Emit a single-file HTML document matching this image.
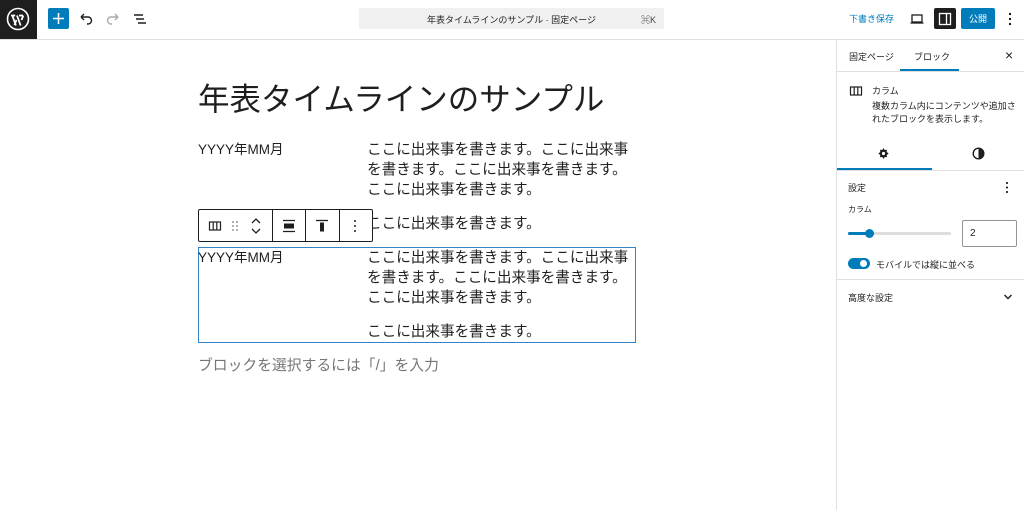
<!DOCTYPE html>
<html><head><meta charset="utf-8"><style>
*{box-sizing:border-box;margin:0;padding:0}
body{width:1024px;height:510px;overflow:hidden;background:#fff;font-family:"Liberation Sans","Noto Sans CJK JP",sans-serif;color:#1e1e1e;position:relative}
.a{position:absolute}
.t{white-space:nowrap}
</style></head><body>
<div class="a" style="left:0;top:0;width:1024px;height:40px;border-bottom:1px solid #e0e0e0"></div>
<div class="a" style="left:0;top:0;width:37px;height:39px;background:#1e1e1e"></div>
<svg class="a" style="left:6px;top:7px" width="24" height="24" viewBox="0 0 24 24"><circle cx="12" cy="12" r="10.5" fill="none" stroke="#fff" stroke-width="1.6"/><path d="M5 8.5h4.2M13 8.5h4M6.3 8.5l3.6 10M11 8.5l3.6 10M10.4 13l-2 5.2M15.5 13l1.8-4.5" stroke="#fff" stroke-width="1.8" fill="none"/></svg>
<div class="a" style="left:48px;top:8px;width:21px;height:21px;background:#007cba;border-radius:2px"></div>
<svg class="a" style="left:48px;top:8px" width="21" height="21"><path d="M10.5 5v11M5 10.5h11" stroke="#fff" stroke-width="1.5"/></svg>
<svg class="a" style="left:78px;top:11px" width="16" height="16"><path d="M3 6h7a3.5 3.5 0 0 1 0 7H9M3 6l3-3M3 6l3 3" stroke="#1e1e1e" stroke-width="1.4" fill="none"/></svg>
<svg class="a" style="left:105px;top:11px" width="16" height="16"><path d="M13 6H6a3.5 3.5 0 0 0 0 7h1M13 6l-3-3M13 6l-3 3" stroke="#aaa" stroke-width="1.4" fill="none"/></svg>
<svg class="a" style="left:132px;top:11px" width="16" height="16"><path d="M2 4h9M4 8h8M6 12h8" stroke="#1e1e1e" stroke-width="1.4"/></svg>
<div class="a" style="left:359px;top:8px;width:305px;height:21px;background:#f0f0f0;border-radius:2px"></div>
<div class="a t" style="left:359px;top:13px;width:305px;text-align:center;font-size:9px;color:#1e1e1e">年表タイムラインのサンプル · 固定ページ</div>
<div class="a t" style="left:641px;top:13px;font-size:9px;color:#444">⌘K</div>
<div class="a t" style="left:849px;top:12px;font-size:9px;color:#007cba">下書き保存</div>
<svg class="a" style="left:909px;top:11px" width="16" height="16"><rect x="3" y="4" width="10" height="7" fill="none" stroke="#1e1e1e" stroke-width="1.3"/><path d="M1.5 12h13" stroke="#1e1e1e" stroke-width="1.3"/></svg>
<div class="a" style="left:934px;top:8px;width:22px;height:21px;background:#1e1e1e;border-radius:2px"></div>
<svg class="a" style="left:937px;top:11px" width="16" height="16"><rect x="2.5" y="2.5" width="11" height="11" fill="none" stroke="#fff" stroke-width="1.3"/><path d="M9.5 2.5v11" stroke="#fff" stroke-width="1.3"/></svg>
<div class="a" style="left:961px;top:8px;width:34px;height:21px;background:#007cba;border-radius:2px"></div>
<div class="a t" style="left:961px;top:12px;width:34px;text-align:center;font-size:9px;color:#fff">公開</div>
<svg class="a" style="left:1004px;top:10px" width="12" height="18"><circle cx="6" cy="4" r="1.1"/><circle cx="6" cy="9" r="1.1"/><circle cx="6" cy="14" r="1.1"/></svg>

<div class="a" style="left:836px;top:40px;width:1px;height:470px;background:#e0e0e0"></div>
<div class="a t" style="left:849px;top:50px;font-size:9px">固定ページ</div>
<div class="a t" style="left:914px;top:50px;font-size:9px">ブロック</div>
<div class="a" style="left:900px;top:69px;width:59px;height:2px;background:#007cba"></div>
<div class="a t" style="left:1005px;top:47px;font-size:14px">×</div>
<div class="a" style="left:837px;top:71px;width:187px;height:1px;background:#e0e0e0"></div>
<svg class="a" style="left:849px;top:84px" width="14" height="14"><rect x="1.5" y="3" width="11" height="8" fill="none" stroke="#1e1e1e" stroke-width="1.2"/><path d="M5.2 3v8M8.8 3v8" stroke="#1e1e1e" stroke-width="1.2"/></svg>
<div class="a t" style="left:872px;top:84px;font-size:9px">カラム</div>
<div class="a t" style="left:872px;top:100px;font-size:9px;line-height:13px">複数カラム内にコンテンツや追加さ<br>れたブロックを表示します。</div>
<svg class="a" style="left:877px;top:147px" width="13" height="13" viewBox="0 0 13 13"><path d="M6.5 1l1.2 2 2.3-.3-.3 2.3 2 1.5-2 1.5.3 2.3-2.3-.3-1.2 2-1.2-2-2.3.3.3-2.3-2-1.5 2-1.5-.3-2.3 2.3.3z" fill="#1e1e1e"/><circle cx="6.5" cy="6.5" r="1.6" fill="#fff"/></svg>
<svg class="a" style="left:972px;top:147px" width="13" height="13"><circle cx="6.5" cy="6.5" r="5.3" fill="none" stroke="#1e1e1e" stroke-width="1.4"/><path d="M6.5 1.2a5.3 5.3 0 0 1 0 10.6z" fill="#1e1e1e"/></svg>
<div class="a" style="left:837px;top:168px;width:95px;height:2px;background:#007cba"></div>
<div class="a" style="left:837px;top:170px;width:187px;height:1px;background:#e0e0e0"></div>
<div class="a t" style="left:848px;top:181px;font-size:9px">設定</div>
<svg class="a" style="left:1001px;top:180px" width="12" height="16"><circle cx="6" cy="3" r="1"/><circle cx="6" cy="7.5" r="1"/><circle cx="6" cy="12" r="1"/></svg>
<div class="a t" style="left:848px;top:204px;font-size:8px">カラム</div>
<div class="a" style="left:848px;top:232px;width:103px;height:3px;background:#ddd;border-radius:2px"></div>
<div class="a" style="left:848px;top:232px;width:22px;height:3px;background:#007cba;border-radius:2px"></div>
<div class="a" style="left:865px;top:229px;width:9px;height:9px;background:#007cba;border-radius:50%"></div>
<div class="a" style="left:962px;top:220px;width:55px;height:27px;border:1px solid #949494;border-radius:2px"></div>
<div class="a t" style="left:970px;top:228px;font-size:10px">2</div>
<div class="a" style="left:848px;top:258px;width:22px;height:11px;background:#007cba;border-radius:6px"></div>
<div class="a" style="left:860px;top:260px;width:7px;height:7px;background:#fff;border-radius:50%"></div>
<div class="a t" style="left:876px;top:258px;font-size:9px">モバイルでは縦に並べる</div>
<div class="a" style="left:837px;top:279px;width:187px;height:1px;background:#e0e0e0"></div>
<div class="a t" style="left:848px;top:291px;font-size:9px">高度な設定</div>
<svg class="a" style="left:1002px;top:292px" width="12" height="10"><path d="M2.5 3l3.5 3.5 3.5-3.5" stroke="#1e1e1e" stroke-width="1.4" fill="none"/></svg>

<div class="a t" style="left:198px;top:79px;font-size:31.5px;line-height:40px">年表タイムラインのサンプル</div>
<div class="a t" style="left:198px;top:140px;font-size:13.5px;line-height:20px">YYYY年MM月</div>
<div class="a t" style="left:367px;top:140px;font-size:14.6px;line-height:20px">ここに出来事を書きます。ここに出来事<br>を書きます。ここに出来事を書きます。<br>ここに出来事を書きます。</div>
<div class="a t" style="left:367px;top:214px;font-size:14.6px;line-height:20px">ここに出来事を書きます。</div>

<div class="a" style="left:198px;top:209px;width:175px;height:33px;background:#fff;border:1px solid #1e1e1e;border-radius:2px"></div>
<div class="a" style="left:272px;top:210px;width:1px;height:31px;background:#1e1e1e"></div>
<div class="a" style="left:305px;top:210px;width:1px;height:31px;background:#1e1e1e"></div>
<div class="a" style="left:339px;top:210px;width:1px;height:31px;background:#1e1e1e"></div>
<svg class="a" style="left:208px;top:219px" width="14" height="14"><rect x="1.5" y="3" width="11" height="8" fill="none" stroke="#1e1e1e" stroke-width="1.2"/><path d="M5.2 3v8M8.8 3v8" stroke="#1e1e1e" stroke-width="1.2"/></svg>
<svg class="a" style="left:230px;top:219px" width="10" height="14" fill="#777"><circle cx="3" cy="3" r=".9"/><circle cx="7" cy="3" r=".9"/><circle cx="3" cy="7" r=".9"/><circle cx="7" cy="7" r=".9"/><circle cx="3" cy="11" r=".9"/><circle cx="7" cy="11" r=".9"/></svg>
<svg class="a" style="left:249px;top:216px" width="14" height="20"><path d="M3 7l4-4 4 4M3 13l4 4 4-4" stroke="#1e1e1e" stroke-width="1.3" fill="none"/></svg>
<svg class="a" style="left:282px;top:218px" width="14" height="16"><path d="M1 2.5h12M1 13.5h12" stroke="#1e1e1e" stroke-width="1.2"/><rect x="2" y="5.5" width="10" height="5" fill="#1e1e1e"/></svg>
<svg class="a" style="left:315px;top:218px" width="14" height="16"><path d="M1 2.5h12" stroke="#1e1e1e" stroke-width="1.3"/><rect x="5" y="4.5" width="4" height="9" fill="#1e1e1e"/></svg>
<svg class="a" style="left:350px;top:218px" width="10" height="16" fill="#1e1e1e"><circle cx="5" cy="3" r="1"/><circle cx="5" cy="8" r="1"/><circle cx="5" cy="13" r="1"/></svg>

<div class="a" style="left:198px;top:247px;width:438px;height:96px;border:1px solid #3582c4"></div>
<div class="a t" style="left:198px;top:248px;font-size:13.5px;line-height:20px">YYYY年MM月</div>
<div class="a t" style="left:367px;top:248px;font-size:14.6px;line-height:20px">ここに出来事を書きます。ここに出来事<br>を書きます。ここに出来事を書きます。<br>ここに出来事を書きます。</div>
<div class="a t" style="left:367px;top:322px;font-size:14.6px;line-height:20px">ここに出来事を書きます。</div>
<div class="a t" style="left:198px;top:356px;font-size:14.8px;line-height:20px;color:#757575">ブロックを選択するには「/」を入力</div>
</body></html>
